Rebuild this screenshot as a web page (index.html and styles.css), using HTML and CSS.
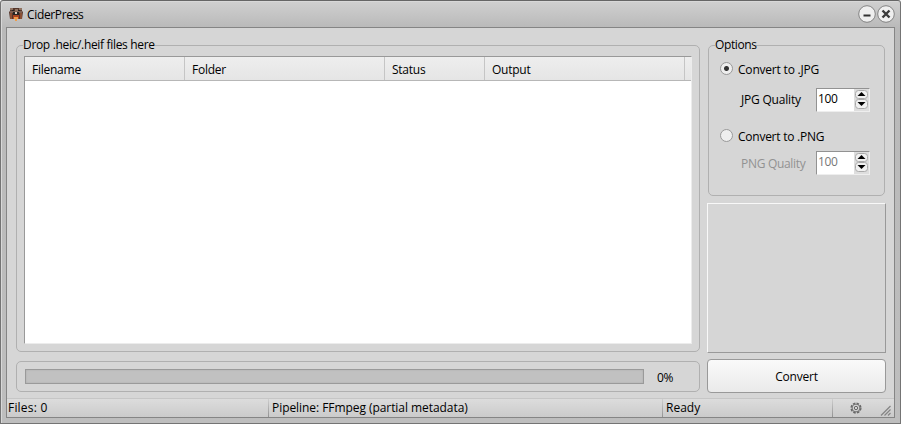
FILE: index.html
```
<!DOCTYPE html>
<html lang="en">
<head>
    <meta charset="utf-8">
    <title>CiderPress</title>
    <link rel="stylesheet" href="styles.css">
</head>
<body>
    <div class="window">
        <div class="titlebar">
            <svg class="app-icon" width="14" height="15" viewBox="0 0 14 15">
                <path d="M1 1h12v3l1 1-1 7H1L0 5l1-1z" fill="#54352a"/>
                <path d="M1 1h3v2H1zM6 2h3v2H6zM10 1h3v2h-3z" fill="#8f7260"/>
                <path d="M3 3h2v1H3zM9 3h2v1H9z" fill="#252424"/>
                <path d="M1 4.500h12v1H1z" fill="#a58a78"/>
                <path d="M1 6h2v6H1zM11 6h2v6h-2z" fill="#8a4f34"/>
                <path d="M4 5h6v3H4z" fill="#252424"/>
                <path d="M6 5h2v2H6z" fill="#d8cbbb"/>
                <path d="M4 8h6v4H4z" fill="#a8421f"/>
                <path d="M5 10h4v2H8v2H6v-2H5z" fill="#ef9c49"/>
            </svg>
            <span class="app-title">CiderPress</span>
            <div class="window-buttons">
                <svg width="18" height="18" viewBox="0 0 18 18">
                    <circle cx="9" cy="9" r="8.3" fill="#efefef" stroke="#848484"/>
                    <path d="M5.5 10.5h7" stroke="#333" stroke-width="2"/>
                </svg>
                <svg width="18" height="18" viewBox="0 0 18 18">
                    <circle cx="9" cy="9" r="8.3" fill="#efefef" stroke="#848484"/>
                    <path d="M5.5 5.5l7 7m0-7l-7 7" stroke="#3a3a3a" stroke-width="2.4"/>
                </svg>
            </div>
        </div>

        <div class="client">
            <div class="main">
                <div class="left">
                    <fieldset class="group files">
                        <legend class="drop-label">Drop .heic/.heif files here</legend>
                        <div class="list">
                            <div class="list-header">
                                <div class="col col-name">Filename</div>
                                <div class="col col-folder">Folder</div>
                                <div class="col col-status">Status</div>
                                <div class="col col-output">Output</div>
                            </div>
                        </div>
                    </fieldset>
                    <div class="group progress">
                        <div class="progress-bar"></div>
                        <span class="percent">0%</span>
                    </div>
                </div>

                <div class="right">
                    <fieldset class="group options">
                        <legend>Options</legend>
                        <div class="choice">
                            <span class="radio checked"></span>
                            <span>Convert to .JPG</span>
                        </div>
                        <div class="quality">
                            <span class="quality-label">JPG Quality</span>
                            <div class="spinner">
                                <span class="value">100</span>
                                <svg width="13" height="21" viewBox="0 0 13 21">
                                    <rect x=".5" y="1.5" width="12" height="8" rx="3" fill="#f1f1f1" stroke="#aaa"/>
                                    <rect x=".5" y="10.5" width="12" height="9" rx="3" fill="#f1f1f1" stroke="#aaa"/>
                                    <path d="M2.5 7h8l-4-4zM2.5 13h8l-4 4z" fill="#000"/>
                                </svg>
                            </div>
                        </div>
                        <div class="choice choice-png">
                            <span class="radio"></span>
                            <span class="png-label">Convert to .PNG</span>
                        </div>
                        <div class="quality quality-png disabled">
                            <span class="quality-label">PNG Quality</span>
                            <div class="spinner">
                                <span class="value">100</span>
                                <svg width="13" height="21" viewBox="0 0 13 21">
                                    <rect x=".5" y="1.5" width="12" height="8" rx="3" fill="#f1f1f1" stroke="#aaa"/>
                                    <rect x=".5" y="10.5" width="12" height="9" rx="3" fill="#f1f1f1" stroke="#aaa"/>
                                    <path d="M2.5 7h8l-4-4zM2.5 13h8l-4 4z" fill="#000"/>
                                </svg>
                            </div>
                        </div>
                    </fieldset>
                    <div class="preview"></div>
                    <button class="convert">Convert</button>
                </div>
            </div>

            <div class="statusbar">
                <div class="status status-files">Files: 0</div>
                <div class="status status-pipeline">Pipeline: FFmpeg (partial metadata)</div>
                <div class="status status-ready">Ready</div>
                <div class="status status-settings">
                    <svg class="gear" width="12" height="12" viewBox="0 0 12 12" fill="none" stroke="#666">
                        <circle cx="6" cy="6" r="4.9" stroke-width="1.3" stroke-dasharray="2.6 1.25"/>
                        <circle cx="6" cy="6" r="3.9" stroke-width=".9"/>
                        <circle cx="6" cy="6" r="1.7"/>
                    </svg>
                    <svg class="grip" width="11" height="11" viewBox="0 0 11 11">
                        <path d="M1 10.500L10.500 1M4.500 10.500l6-6M8 10.500l2.500-2.500" stroke="#858585" stroke-width="1.200"/>
                    </svg>
                </div>
            </div>
        </div>
    </div>
</body>
</html>
```

FILE: styles.css
```
* {
    box-sizing: border-box;
}

body {
    margin: 0;
    font-family: "Open Sans", "Noto Sans", sans-serif;
    font-size: 12px;
    line-height: 16px;
    color: #000;
}

.window {
    display: flex;
    flex-direction: column;
    width: 901px;
    height: 424px;
    padding: 0 5px 5px;
    border: 1px solid #747474;
    border-top-color: #666;
    border-radius: 3px 3px 0 0;
    background: linear-gradient(#d0d0d0, #b9b9b9 27px, #bebebe);
    box-shadow: inset 1px 1px #d8d8d8;
}

.titlebar {
    display: flex;
    align-items: center;
    height: 26px;
    padding-left: 3px;
}

.app-icon {
    margin-top: 1px;
}

.app-title {
    margin: 1px 0 0 4px;
    letter-spacing: -0.35px;
}

.window-buttons {
    display: flex;
    gap: 1px;
    margin-left: auto;
}

.client {
    display: flex;
    flex-direction: column;
    flex: 1;
    border: 1px solid #858585;
    background-color: #d6d6d6;
}

.main {
    display: flex;
    gap: 7px;
    height: 370px;
    padding: 9px 8px 0 9px;
}

.left {
    display: flex;
    flex-direction: column;
    gap: 9px;
    width: 684px;
}

.right {
    display: flex;
    flex-direction: column;
    width: 179px;
}

.group {
    margin: 0;
    border: 1px solid #b0b0b0;
    border-radius: 5px;
}

legend {
    margin-left: -1px;
    padding: 0;
    letter-spacing: -0.33px;
}

.files {
    height: 315px;
    padding: 3px 7px 7px;
}

.list {
    height: 288px;
    border: 1px solid #999;
    border-right-color: #ececec;
    border-bottom-color: #ececec;
    background-color: #fff;
}

.list-header {
    display: flex;
    height: 24px;
    border-bottom: 1px solid #b7b7b7;
    background: linear-gradient(#eee, #e5e5e5);
}

.col {
    padding: 5px 7px;
    border-right: 1px solid #c5c5c5;
    letter-spacing: -0.25px;
}

.col-name {
    width: 160px;
}

.col-folder,
.col-output {
    width: 200px;
}

.col-status {
    width: 100px;
}

.progress {
    display: flex;
    align-items: center;
    height: 31px;
    padding: 0 8px;
}

.progress-bar {
    width: 619px;
    height: 15px;
    border: 1px solid #9a9a9a;
    background-color: #c1c1c1;
    box-shadow: inset 0 0 2px #aaa;
}

.percent {
    margin: 2px 0 0 13px;
    letter-spacing: -0.3px;
}

.options {
    height: 159px;
    margin: 0 1px;
    padding: 8px 11px 0;
}

.options legend {
    margin-left: -5px;
    letter-spacing: -0.4px;
}

.choice {
    display: flex;
    align-items: center;
    gap: 5px;
    height: 16px;
    letter-spacing: -0.2px;
}

.choice .radio + span {
    padding-top: 1px;
}

.radio {
    width: 13px;
    height: 13px;
    margin-top: -1px;
    border: 1px solid #999;
    border-radius: 50%;
    background-color: #eee;
}

.radio.checked {
    background: radial-gradient(circle, #333 0 2px, #eee 3px);
}

.choice .png-label {
    padding-top: 0;
    letter-spacing: -0.25px;
}

.quality {
    display: flex;
    align-items: center;
    height: 24px;
    margin-top: 11px;
    padding-left: 21px;
}

.quality-label {
    width: 75px;
    letter-spacing: -0.2px;
}

.spinner {
    display: flex;
    justify-content: space-between;
    width: 54px;
    height: 24px;
    padding: 0 1px 0 1px;
    border: 1px solid #929292;
    border-right-color: #eee;
    border-bottom-color: #eee;
    background: linear-gradient(to right, #fff 37px, #dedede 37px);
}

.value {
    padding-top: 2px;
    letter-spacing: -0.4px;
}

.choice-png {
    margin-top: 16px;
}

.quality-png {
    margin-top: 7px;
}

.quality-png .quality-label {
    padding-top: 2px;
    letter-spacing: -0.3px;
}

.disabled {
    color: #929292;
}

.disabled .value {
    color: #777;
}

.preview {
    height: 150px;
    margin-top: 7px;
    border: 1px solid #f8f8f8;
    border-right-color: #999;
    border-bottom-color: #999;
}

.convert {
    height: 34px;
    margin-top: 6px;
    padding-top: 3px;
    border: 1px solid #999;
    border-radius: 4px;
    background: linear-gradient(#fafafa, #eaeaea);
    color: #000;
    font: inherit;
    letter-spacing: -0.2px;
}

.statusbar {
    display: flex;
    flex: 1;
    border-top: 1px solid #c6c6c6;
    background: linear-gradient(#dcdcdc, #cbcbcb);
}

/* dividers fade in from the top */
.status {
    padding: 1px 0 0 3px;
    border-right: 1px solid;
    border-image: linear-gradient(#d2d2d2, #8f8f8f) 1;
    border-width: 0 1px 0 0;
}

.status-files {
    width: 262px;
    padding-left: 1px;
    letter-spacing: 0.2px;
}

.status-pipeline {
    width: 394px;
    letter-spacing: -0.06px;
}

.status-ready {
    width: 170px;
}

.status-settings {
    display: flex;
    flex: 1;
    padding: 3px 3px 0 17px;
    border: none;
}

.grip {
    margin: 3px 0 0 auto;
}
```
